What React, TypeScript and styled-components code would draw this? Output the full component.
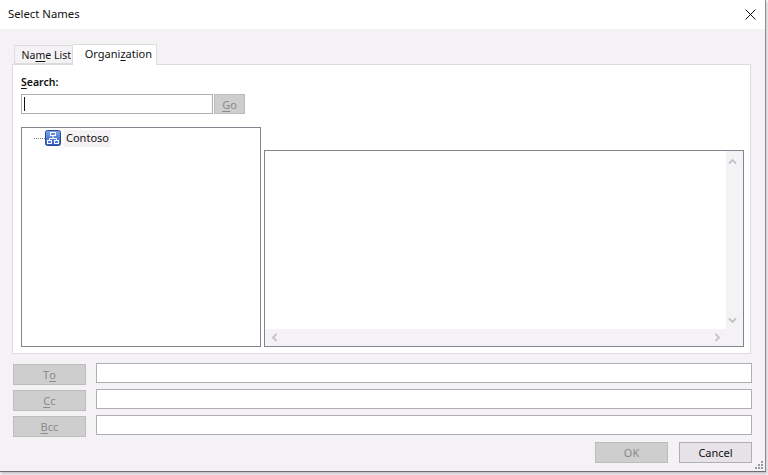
import * as React from 'react';
import styled, { createGlobalStyle } from 'styled-components';

const GlobalStyle = createGlobalStyle`
    html, body {
        margin: 0;
        padding: 0;
        background: #f3f1f4;
    }
    body {
        font-family: "Noto Sans", "Liberation Sans", sans-serif;
        font-size: 11px;
        color: #111;
    }
    u {
        text-underline-offset: 2px;
    }
`;

const Screen = styled.div`
    width: 768px;
    height: 475px;
    overflow: hidden;
`;

const Window = styled.div`
    position: relative;
    box-sizing: border-box;
    width: 766px;
    height: 472px;
    background: #f5f2f6;
    border-right: 1px solid #8e8e92;
    border-bottom: 1px solid #6e6e72;
    box-shadow: 1px 2px 2px rgba(0, 0, 0, 0.18);
`;

const TitleBar = styled.div`
    display: flex;
    align-items: center;
    justify-content: space-between;
    height: 29px;
    padding: 0 9px 2px 8px;
    box-sizing: border-box;
    background: #fff;
    font-size: 11.3px;
`;

const CloseIcon = styled.svg`
    display: block;
    margin-top: 2px;
`;

const Body = styled.div`
    padding: 15px 13px 0 12px;
`;

const TabRow = styled.div`
    display: flex;
    align-items: flex-end;
    height: 20px;
    padding-left: 2px;
`;

const Tab = styled.div<{ $active?: boolean }>`
    box-sizing: border-box;
    position: relative;
    z-index: ${p => (p.$active ? 1 : 0)};
    display: flex;
    align-items: center;
    justify-content: flex-end;
    width: ${p => (p.$active ? 84 : 59)}px;
    height: ${p => (p.$active ? 21 : 19)}px;
    margin-bottom: ${p => (p.$active ? -1 : 0)}px;
    padding: ${p => (p.$active ? '0 4px 3px 0' : '1px 1px 0 0')};
    background: ${p => (p.$active ? '#fff' : '#f5f2f6')};
    border: 1px solid #dcdcdc;
    border-left: ${p => (p.$active ? 'none' : '1px solid #dcdcdc')};
    border-bottom: ${p => (p.$active ? 'none' : '1px solid #dcdcdc')};
    font-size: ${p => (p.$active ? 11 : 10.5)}px;
`;

const Panel = styled.div`
    box-sizing: border-box;
    width: 739px;
    height: 290px;
    background: #fff;
    border: 1px solid #dcdcdc;
    padding: 10px 4px 5px 8px;
`;

const SearchLabel = styled.div`
    height: 19px;
    line-height: 15px;
    font-weight: 600;
    font-size: 10.5px;
`;

const SearchRow = styled.div`
    display: flex;
    gap: 1px;
    height: 20px;
`;

const SearchInput = styled.div`
    box-sizing: border-box;
    display: flex;
    align-items: center;
    width: 192px;
    padding-left: 2px;
    background: #fff;
    border: 1px solid #aeaeb4;
`;

const Caret = styled.span`
    width: 1px;
    height: 14px;
    background: #111;
`;

const Button = styled.div<{ $disabled?: boolean; $width: number; $height?: number }>`
    box-sizing: border-box;
    display: flex;
    align-items: center;
    justify-content: center;
    width: ${p => p.$width}px;
    height: ${p => p.$height ?? 21}px;
    background: ${p => (p.$disabled ? '#cecece' : '#e6e2e8')};
    border: 1px solid ${p => (p.$disabled ? '#bcbcbc' : '#aeaeb4')};
    color: ${p => (p.$disabled ? '#8a8a8a' : '#111')};
`;

const Columns = styled.div`
    display: flex;
    align-items: flex-start;
    gap: 3px;
    margin-top: 13px;
`;

const Tree = styled.div`
    box-sizing: border-box;
    display: flex;
    align-items: flex-start;
    width: 240px;
    height: 220px;
    padding: 0 0 0 12px;
    border: 1px solid #84848e;
`;

const TreeLine = styled.span`
    width: 11px;
    height: 9px;
    margin-top: 1px;
    border-bottom: 1px dotted #777;
`;

const TreeIcon = styled.svg`
    display: block;
    flex: none;
    margin-top: 2px;
`;

const TreeLabel = styled.span`
    height: 17px;
    line-height: 16px;
    margin: 2px 0 0 3px;
    padding: 0 2px;
    background: #f5f2f6;
`;

const ListBox = styled.div`
    box-sizing: border-box;
    display: grid;
    grid-template-columns: 1fr 17px;
    grid-template-rows: 1fr 17px;
    width: 480px;
    height: 197px;
    margin-top: 23px;
    border: 1px solid #84848e;
`;

const ListArea = styled.div`
    background: #fff;
`;

const ScrollV = styled.div`
    display: flex;
    flex-direction: column;
    align-items: center;
    justify-content: space-between;
    padding: 6px 4px 4px 0;
    background: #f5f2f6;
`;

const ScrollH = styled.div`
    display: flex;
    align-items: center;
    justify-content: space-between;
    padding: 0 4px 0 5px;
    background: #f5f2f6;
`;

const ScrollCorner = styled.div`
    background: #f5f2f6;
`;

const Recipients = styled.div`
    display: flex;
    flex-direction: column;
    gap: 5px;
    margin: 10px 0 0 1px;
`;

const RecipientRow = styled.div`
    display: flex;
    align-items: flex-start;
    gap: 10px;
    height: 21px;
`;

const RecipientInput = styled.div`
    box-sizing: border-box;
    width: 657px;
    height: 20px;
    margin-top: -1px;
    background: #fff;
    border: 1px solid #aeaeb4;
`;

const Footer = styled.div`
    display: flex;
    justify-content: flex-end;
    gap: 11px;
    margin-top: 5px;
`;

const Grip = styled.svg`
    position: absolute;
    right: 1px;
    bottom: 1px;
    display: block;
`;

const Chevron = ({ d }: { d: string }) => (
    <svg width="9" height="9" viewBox="0 0 9 9" fill="none" stroke="#c4c4c8" strokeWidth="1.8">
        <path d={d} />
    </svg>
);

const OrgIcon = () => (
    <TreeIcon width="16" height="16" viewBox="0 0 16 16">
        <defs>
            <linearGradient id="orgFill" x1="0" y1="0" x2="0" y2="1">
                <stop offset="0" stopColor="#7fa8ea" />
                <stop offset="1" stopColor="#2a5cc0" />
            </linearGradient>
        </defs>
        <rect x="0.5" y="0.5" width="15" height="15" rx="2" fill="url(#orgFill)" stroke="#2a4a92" />
        <rect x="5.5" y="2.5" width="5" height="3" fill="#5b8be0" stroke="#fff" />
        <path d="M8 6v2.5M4.5 10v-1.5h7v1.5" fill="none" stroke="#fff" />
        <rect x="2.5" y="10.5" width="4" height="3" fill="#4f7fd8" stroke="#fff" />
        <rect x="9.5" y="10.5" width="4" height="3" fill="#4f7fd8" stroke="#fff" />
    </TreeIcon>
);

const recipients = [
    { key: 'to', label: <>T<u>o</u></> },
    { key: 'cc', label: <><u>C</u>c</> },
    { key: 'bcc', label: <><u>B</u>cc</> }
];

export default function App() {
    return (
        <Screen>
            <GlobalStyle />
            <Window>
                <TitleBar>
                    <span>Select Names</span>
                    <CloseIcon width="11" height="11" viewBox="0 0 11 11" stroke="#111" strokeWidth="1">
                        <path d="M0.5 0.5l10 10M10.5 0.5l-10 10" />
                    </CloseIcon>
                </TitleBar>
                <Body>
                    <TabRow>
                        <Tab>Na<u>m</u>e List</Tab>
                        <Tab $active>Organi<u>z</u>ation</Tab>
                    </TabRow>
                    <Panel>
                        <SearchLabel><u>S</u>earch:</SearchLabel>
                        <SearchRow>
                            <SearchInput><Caret /></SearchInput>
                            <Button $disabled $width={31} $height={20}><u>G</u>o</Button>
                        </SearchRow>
                        <Columns>
                            <Tree>
                                <TreeLine />
                                <OrgIcon />
                                <TreeLabel>Contoso</TreeLabel>
                            </Tree>
                            <ListBox>
                                <ListArea />
                                <ScrollV>
                                    <Chevron d="M1 6.5l3.5-3.5 3.5 3.5" />
                                    <Chevron d="M1 2.5l3.5 3.5 3.5-3.5" />
                                </ScrollV>
                                <ScrollH>
                                    <Chevron d="M6.5 1l-3.5 3.5 3.5 3.5" />
                                    <Chevron d="M2.5 1l3.5 3.5-3.5 3.5" />
                                </ScrollH>
                                <ScrollCorner />
                            </ListBox>
                        </Columns>
                    </Panel>
                    <Recipients>
                        {recipients.map(r => (
                            <RecipientRow key={r.key}>
                                <Button $disabled $width={73}>{r.label}</Button>
                                <RecipientInput />
                            </RecipientRow>
                        ))}
                    </Recipients>
                    <Footer>
                        <Button $disabled $width={73}>OK</Button>
                        <Button $width={73}>Cancel</Button>
                    </Footer>
                </Body>
                <Grip width="9" height="9" viewBox="0 0 9 9" fill="#9a9a9e">
                    <rect x="6" y="0" width="2" height="2" />
                    <rect x="3" y="3" width="2" height="2" />
                    <rect x="6" y="3" width="2" height="2" />
                    <rect x="0" y="6" width="2" height="2" />
                    <rect x="3" y="6" width="2" height="2" />
                    <rect x="6" y="6" width="2" height="2" />
                </Grip>
            </Window>
        </Screen>
    );
}
